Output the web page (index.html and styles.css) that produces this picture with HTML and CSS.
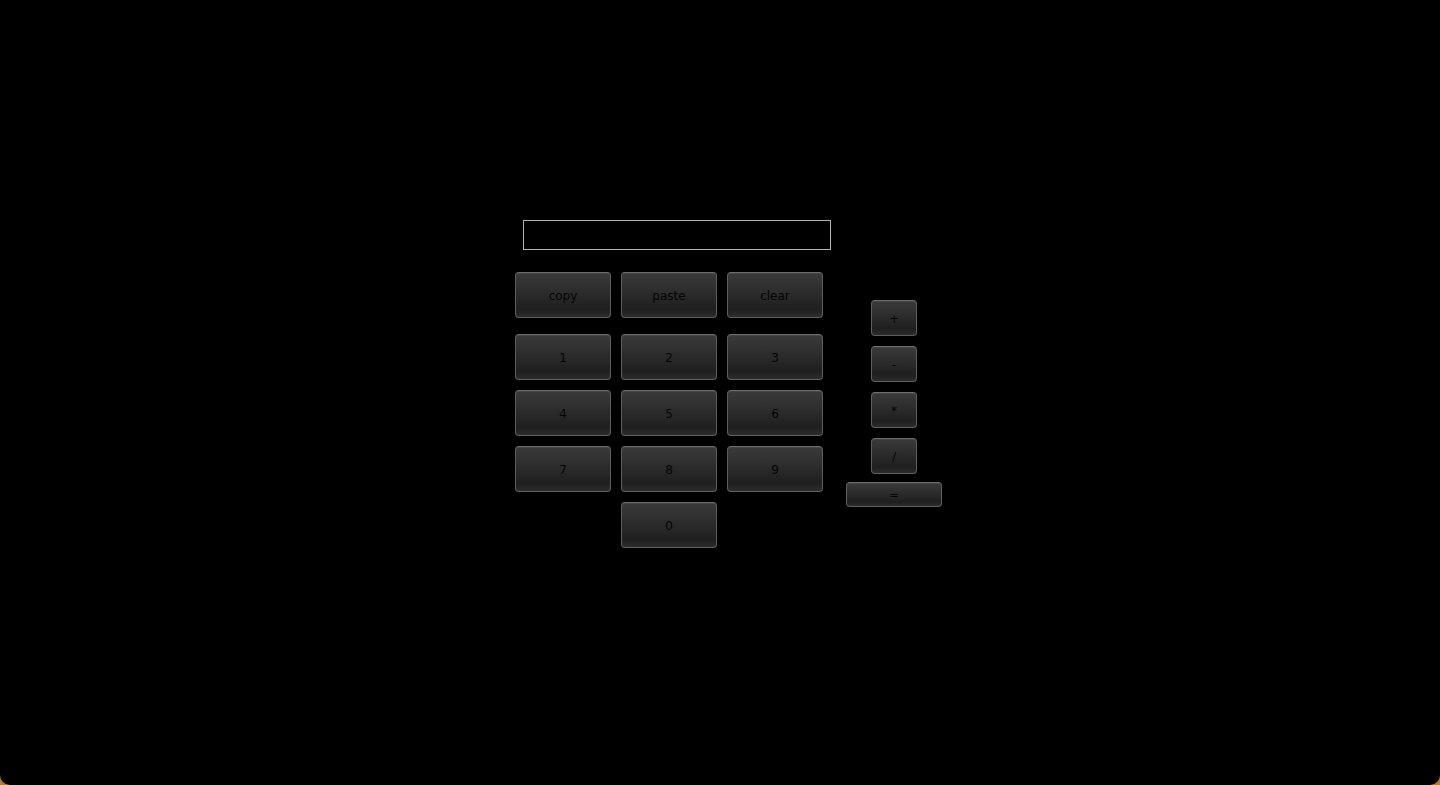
FILE: index.html
```html
<!DOCTYPE html>
<html>
<head>
    <title>Calculator</title>
    <meta charset="utf-8" />
    <link rel="stylesheet" href="styles.css">
</head>
<body>
    <div class="window">
        <div class="calc">
            <div class="main">
                <input type="text" class="display" id="txt_display" />
                <div class="keys">
                    <div class="row row-tools">
                        <button class="btn">copy</button>
                        <button class="btn">paste</button>
                        <button class="btn">clear</button>
                    </div>
                    <div class="row">
                        <button class="btn">1</button>
                        <button class="btn">2</button>
                        <button class="btn">3</button>
                    </div>
                    <div class="row">
                        <button class="btn">4</button>
                        <button class="btn">5</button>
                        <button class="btn">6</button>
                    </div>
                    <div class="row">
                        <button class="btn">7</button>
                        <button class="btn">8</button>
                        <button class="btn">9</button>
                    </div>
                    <div class="row row-zero">
                        <button class="btn">0</button>
                    </div>
                </div>
            </div>
            <div class="ops">
                <button class="btn btn-op">+</button>
                <button class="btn btn-op">-</button>
                <button class="btn btn-op">*</button>
                <button class="btn btn-op">/</button>
                <button class="btn btn-eq">=</button>
            </div>
        </div>
    </div>
</body>
</html>
```

FILE: styles.css
```css
html {
    background: #b07a3a;
}
body {
    margin: 0;
    font-family: 'DejaVu Sans', 'Liberation Sans', sans-serif;
}
.window {
    height: 785px;
    background: #000;
    border-radius: 0 0 10px 10px;
    box-sizing: border-box;
    padding: 220px 0 0 515px;
}
.calc {
    display: flex;
    align-items: flex-start;
}
.main {
    width: 316px;
}
.display {
    display: block;
    box-sizing: border-box;
    width: 308px;
    height: 30px;
    margin: 0 0 22px 8px;
    border: 1px solid #b4b4b4;
    background: #000;
    color: #eee;
    outline: none;
}
.keys {
    display: flex;
    flex-direction: column;
    gap: 10px;
}
.row {
    display: flex;
    gap: 10px;
}
.row-tools {
    margin-bottom: 6px;
}
.row-zero {
    padding-left: 106px;
}
.btn {
    width: 96px;
    height: 46px;
    padding: 2px 0 0;
    border: 1px solid #5e5e5e;
    border-top-color: #6e6e6e;
    border-radius: 4px;
    background: linear-gradient(#3a3a3a, #2a2a2a 50%, #1f1f1f 82%, #2c2c2c);
    box-shadow: inset 0 1px 0 rgba(255,255,255,0.06);
    color: #050505;
    font-family: 'DejaVu Sans', 'Liberation Sans', sans-serif;
    font-size: 12px;
    cursor: pointer;
}
.ops {
    display: flex;
    flex-direction: column;
    align-items: center;
    gap: 10px;
    margin: 80px 0 0 15px;
}
.btn-op {
    width: 46px;
    height: 36px;
}
.btn-eq {
    width: 96px;
    height: 25px;
    margin-top: -2px;
    padding-top: 1px;
}
```
